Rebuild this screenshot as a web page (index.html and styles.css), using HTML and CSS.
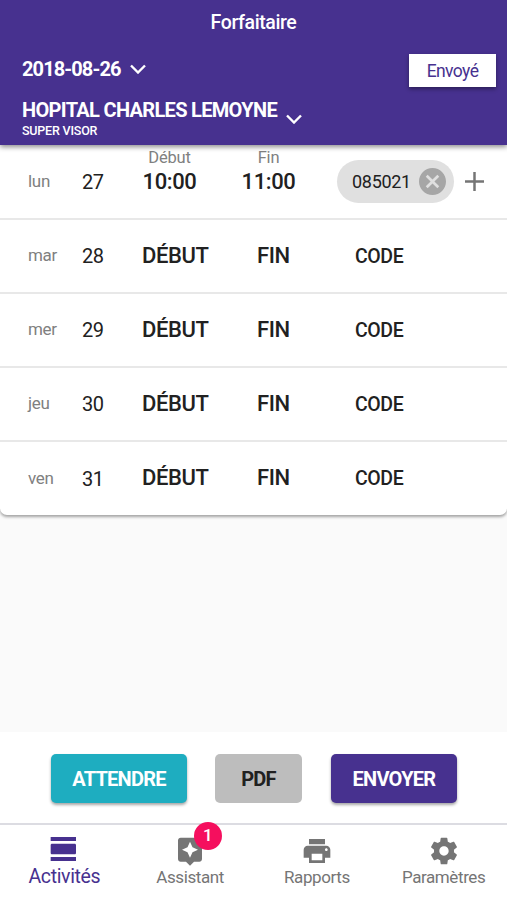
FILE: index.html
```html
<!DOCTYPE html>
<html lang="fr">
<head>
  <meta charset="utf-8">
  <meta name="viewport" content="width=device-width, initial-scale=1">
  <title>Forfaitaire</title>
  <link rel="stylesheet" href="styles.css">
</head>
<body>
<header class="top">
  <h1>Forfaitaire</h1>
  <div class="week">
    <div class="date">
      <span>2018-08-26</span>
      <svg class="chevron" viewBox="0 0 16 10"><path d="M1 1.5l7 7 7-7"/></svg>
    </div>
    <span class="status">Envoyé</span>
  </div>
  <div class="place">
    <div>
      <div class="place-name">HOPITAL CHARLES LEMOYNE</div>
      <div class="place-role">SUPER VISOR</div>
    </div>
    <svg class="chevron" viewBox="0 0 16 10"><path d="M1 1.5l7 7 7-7"/></svg>
  </div>
</header>

<main>
  <ul class="days">
    <li class="filled">
      <span class="day">lun</span>
      <span class="num">27</span>
      <div class="time"><small>Début</small><b>10:00</b></div>
      <div class="time end"><small>Fin</small><b>11:00</b></div>
      <div class="codes">
        <span class="chip">
          085021
          <svg viewBox="2 2 20 20"><path d="M12 2C6.47 2 2 6.47 2 12s4.47 10 10 10 10-4.47 10-10S17.53 2 12 2zm5 13.59L15.59 17 12 13.41 8.41 17 7 15.59 10.59 12 7 8.41 8.41 7 12 10.59 15.59 7 17 8.41 13.41 12 17 15.59z"/></svg>
        </span>
        <svg class="plus" viewBox="0 0 20 20"><path d="M10 0v20M0 10h20"/></svg>
      </div>
    </li>
    <li>
      <span class="day">mar</span>
      <span class="num">28</span>
      <b>DÉBUT</b>
      <b>FIN</b>
      <span class="code">CODE</span>
    </li>
    <li>
      <span class="day">mer</span>
      <span class="num">29</span>
      <b>DÉBUT</b>
      <b>FIN</b>
      <span class="code">CODE</span>
    </li>
    <li>
      <span class="day">jeu</span>
      <span class="num">30</span>
      <b>DÉBUT</b>
      <b>FIN</b>
      <span class="code">CODE</span>
    </li>
    <li>
      <span class="day">ven</span>
      <span class="num">31</span>
      <b>DÉBUT</b>
      <b>FIN</b>
      <span class="code">CODE</span>
    </li>
  </ul>
</main>

<div class="actions">
  <button class="wait">ATTENDRE</button>
  <button class="pdf">PDF</button>
  <button class="send">ENVOYER</button>
</div>

<nav class="tabs">
  <a class="active">
    <svg viewBox="0 0 24 24"><path d="M2 21h19v-3H2v3zM20 8H3c-.55 0-1 .45-1 1v6c0 .55.45 1 1 1h17c.55 0 1-.45 1-1V9c0-.55-.45-1-1-1zM2 3v3h19V3H2z"/></svg>
    <span>Activités</span>
  </a>
  <a>
    <svg viewBox="0 0 24 24"><path d="M19 2H5c-1.1 0-2 .9-2 2v14c0 1.1.9 2 2 2h4l3 3 3-3h4c1.1 0 2-.9 2-2V4c0-1.1-.9-2-2-2zm-5.12 10.88L12 17l-1.88-4.12L6 11l4.12-1.88L12 5l1.88 4.12L18 11l-4.12 1.88z"/></svg>
    <i class="badge">1</i>
    <span>Assistant</span>
  </a>
  <a>
    <svg viewBox="0 0 24 24"><path d="M19 8H5c-1.66 0-3 1.34-3 3v6h4v4h12v-4h4v-6c0-1.66-1.34-3-3-3zm-3 11H8v-5h8v5zm3-7c-.55 0-1-.45-1-1s.45-1 1-1 1 .45 1 1-.45 1-1 1zm-1-9H6v4h12V3z"/></svg>
    <span>Rapports</span>
  </a>
  <a>
    <svg viewBox="0 0 24 24"><path d="M19.43 12.98c.04-.32.07-.64.07-.98s-.03-.66-.07-.98l2.11-1.65c.19-.15.24-.42.12-.64l-2-3.46c-.12-.22-.39-.3-.61-.22l-2.49 1c-.52-.4-1.08-.73-1.69-.98l-.38-2.65C14.46 2.18 14.25 2 14 2h-4c-.25 0-.46.18-.49.42l-.38 2.65c-.61.25-1.17.59-1.69.98l-2.49-1c-.23-.09-.49 0-.61.22l-2 3.46c-.13.22-.07.49.12.64l2.11 1.65c-.04.32-.07.65-.07.98s.03.66.07.98l-2.11 1.65c-.19.15-.24.42-.12.64l2 3.46c.12.22.39.3.61.22l2.49-1c.52.4 1.08.73 1.69.98l.38 2.65c.03.24.24.42.49.42h4c.25 0 .46-.18.49-.42l.38-2.65c.61-.25 1.17-.59 1.69-.98l2.49 1c.23.09.49 0 .61-.22l2-3.46c.12-.22.07-.49-.12-.64l-2.11-1.65zM12 15.5c-1.93 0-3.5-1.57-3.5-3.5s1.57-3.5 3.5-3.5 3.5 1.57 3.5 3.5-1.57 3.5-3.5 3.5z"/></svg>
    <span>Paramètres</span>
  </a>
</nav>
</body>
</html>
```
FILE: styles.css
```css
* {
  box-sizing: border-box;
}

body {
  margin: 0;
  height: 900px;
  display: flex;
  flex-direction: column;
  background: #fafafa;
  color: #212121;
  font-family: Roboto, sans-serif;
  overflow: hidden;
}

/* header */
.top {
  height: 145px;
  flex: none;
  background: #47318f;
  color: #fff;
  box-shadow: 0 2px 5px rgba(0, 0, 0, 0.45);
  position: relative;
  z-index: 1;
}

h1 {
  margin: 0;
  padding-top: 10px;
  font-size: 19.5px;
  line-height: 26px;
  font-weight: 500;
  letter-spacing: -0.4px;
  text-align: center;
}

.week {
  display: flex;
  justify-content: space-between;
  margin: 18px 11px 0 22px;
}

.date {
  display: flex;
  gap: 9px;
  font-size: 20px;
  line-height: 30px;
  font-weight: 700;
  letter-spacing: -0.9px;
}

.chevron {
  width: 16px;
  height: 10px;
  fill: none;
  stroke: #fff;
  stroke-width: 2.4;
}

.date .chevron {
  margin-top: 10px;
}

.status {
  width: 87px;
  height: 33px;
  background: #fff;
  color: #47318f;
  font-size: 17.5px;
  line-height: 34px;
  letter-spacing: -0.6px;
  text-align: center;
  box-shadow: 0 2px 4px rgba(0, 0, 0, 0.4);
}

.place {
  display: flex;
  gap: 9px;
  margin: 11px 0 0 22px;
}

.place-name {
  font-size: 20px;
  line-height: 24px;
  font-weight: 700;
  letter-spacing: -0.68px;
}

.place-role {
  font-size: 12.5px;
  line-height: 18px;
  font-weight: 500;
  letter-spacing: -0.2px;
}

.place .chevron {
  margin-top: 16px;
}

/* days */
main {
  flex: 1;
}

.days {
  list-style: none;
  margin: 0;
  padding: 0;
  background: #fff;
  border-radius: 0 0 7px 7px;
  box-shadow: 0 2px 3px rgba(0, 0, 0, 0.35);
}

.days li {
  display: grid;
  grid-template-columns: 54px 60px 115px 98px 1fr;
  align-items: center;
  height: 74px;
  padding-left: 28px;
  border-bottom: 2px solid #e8e8e8;
}

.days li:last-child {
  height: 73px;
  border-bottom: 0;
}

.days .filled {
  height: 75px;
}

.day {
  padding-bottom: 2px;
  color: #808080;
  font-size: 17px;
  letter-spacing: -0.3px;
}

.num {
  font-size: 20px;
  letter-spacing: -0.5px;
}

.days b {
  padding-bottom: 2px;
  font-size: 22px;
  font-weight: 500;
  letter-spacing: -0.4px;
}

.code {
  font-size: 19.5px;
  font-weight: 500;
  letter-spacing: -0.4px;
}

.time {
  display: flex;
  flex-direction: column;
  align-items: center;
  width: 55px;
  margin-top: -22px;
}

.time.end {
  margin-left: -16px;
}

.time small {
  color: #808080;
  font-size: 16.5px;
  line-height: 22px;
  letter-spacing: -0.2px;
}

.days .time b {
  padding: 0;
  line-height: 25px;
}

.codes {
  display: flex;
  align-items: center;
  gap: 11px;
  margin-left: -18px;
}

.chip {
  display: flex;
  align-items: center;
  justify-content: space-between;
  width: 117px;
  height: 43px;
  padding: 0 8px 0 15px;
  border-radius: 22px;
  background: #e0e0e0;
  font-size: 18px;
  letter-spacing: -0.3px;
}

.chip svg {
  width: 27px;
  height: 27px;
  fill: #a6a6a6;
}

.plus {
  width: 19px;
  height: 19px;
  stroke: #757575;
  stroke-width: 2.6;
}

/* actions */
.actions {
  display: flex;
  height: 91px;
  padding: 22px 0 0 51px;
  background: #fff;
}

button {
  height: 49px;
  padding: 0;
  border: 0;
  border-radius: 5px;
  color: #fff;
  font: 700 20px Roboto, sans-serif;
  letter-spacing: -0.75px;
  box-shadow: 0 2px 3px rgba(0, 0, 0, 0.35);
}

.wait {
  width: 136px;
  background: #1eadc0;
}

.pdf {
  width: 87px;
  margin: 0 29px 0 28px;
  background: #bdbdbd;
  color: #212121;
  box-shadow: none;
}

.send {
  width: 126px;
  background: #47318f;
}

/* tabs */
.tabs {
  display: grid;
  grid-template-columns: repeat(4, 1fr);
  height: 77px;
  border-top: 2px solid #dcdce2;
  background: #fff;
}

.tabs a {
  position: relative;
  display: flex;
  flex-direction: column;
  align-items: center;
  padding-top: 10px;
  color: #757575;
  font-size: 17px;
  letter-spacing: -0.4px;
}

.tabs svg {
  width: 32px;
  height: 32px;
  fill: currentColor;
}

.tabs span {
  line-height: 20px;
}

.tabs .active {
  padding: 8px 0 0 2px;
  color: #47318f;
  font-size: 19.5px;
  letter-spacing: -0.35px;
}

.active span {
  line-height: 23px;
}

.badge {
  position: absolute;
  top: -3px;
  left: 67px;
  width: 28px;
  height: 28px;
  border-radius: 50%;
  background: #f50f5e;
  color: #fff;
  font-size: 17px;
  font-style: normal;
  font-weight: 500;
  line-height: 27px;
  text-align: center;
}
```
